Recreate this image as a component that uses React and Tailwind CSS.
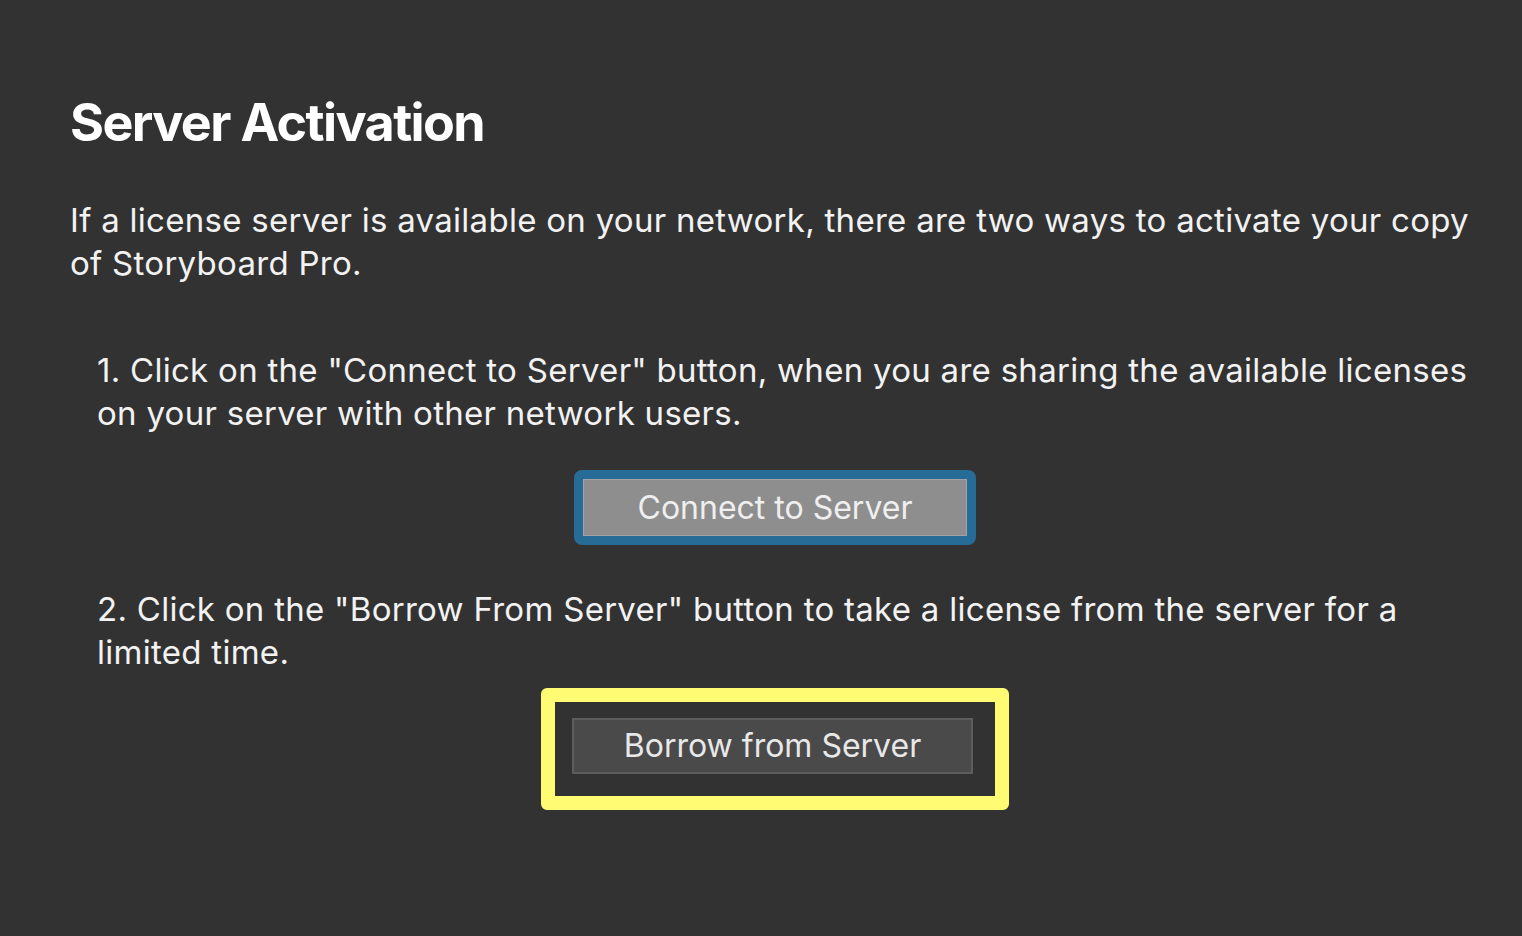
export default function App() {
  return (
    <div
      className="min-h-[936px] w-full bg-[#323232] text-[#f2f2f2] pt-[97px] pl-[70px]"
      style={{ fontFamily: 'Inter, "Liberation Sans", sans-serif' }}
    >
      <div className="w-[1410px]">
        <h1 className="text-[52px] leading-none font-bold tracking-[-1.6px] text-white">
          Server Activation
        </h1>

        <p className="mt-[50px] text-[33px] leading-[43px] tracking-[0.28px]">
          If a license server is available on your network, there are two ways to activate your copy of Storyboard Pro.
        </p>

        {/* Option 1 */}
        <p className="mt-[64px] pl-[27px] text-[33px] leading-[43px] tracking-[0.28px]">
          1. Click on the "Connect to Server" button, when you are sharing the available licenses on your server with other network users.
        </p>
        <div className="mt-[35px] flex justify-center">
          <div className="w-[402px] h-[75px] rounded-[8px] bg-[#276b97] p-[9px]">
            <button className="w-full h-full border border-[#a3a3a3] bg-[#8e8e8e] text-[32px] text-[#efefef] flex items-center justify-center">
              Connect to Server
            </button>
          </div>
        </div>

        {/* Option 2 */}
        <p className="mt-[43px] pl-[27px] text-[33px] leading-[43px] tracking-[0.28px]">
          2. Click on the "Borrow From Server" button to take a license from the server for a limited time.
        </p>
        <div className="mt-[14px] flex justify-center">
          <div className="w-[468px] h-[122px] rounded-[6px] border-[14px] border-[#fffb72] flex justify-center pt-[16px] pr-[5px]">
            <button className="w-[401px] h-[56px] border-2 border-[#5d5d5d] bg-[#4a4a4a] text-[32px] text-[#e8e8e8] flex items-center justify-center">
              Borrow from Server
            </button>
          </div>
        </div>
      </div>
    </div>
  )
}
